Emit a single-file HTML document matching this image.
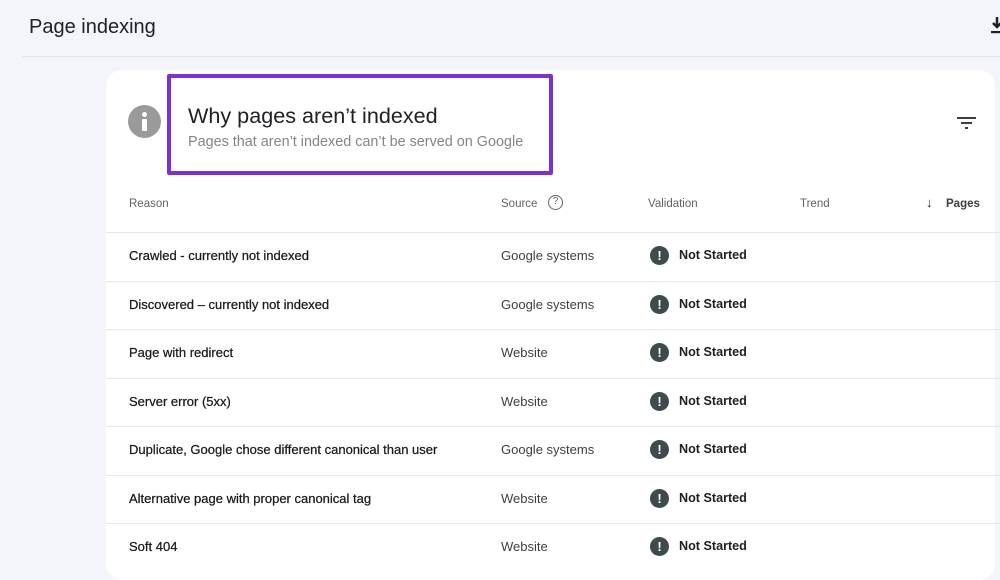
<!DOCTYPE html>
<html><head><meta charset="utf-8"><style>
*{margin:0;padding:0;box-sizing:border-box}
body{width:1000px;height:560px;overflow:hidden;background:#f3f5fa;font-family:"Liberation Sans",sans-serif;position:relative;color:#202124}
.a{position:absolute;white-space:nowrap}
.card{position:absolute;left:106px;top:70px;width:889px;height:510px;background:#fff;border-radius:16px}
.row{position:absolute;left:106px;width:894px;height:1px;background:#e6e7ea}
.r{font-size:13px;color:#1a1a1a;-webkit-text-stroke:0.25px #1a1a1a}
.s{font-size:13px;color:#3c4043}
.ic{position:absolute;left:650px;width:19px;height:19px;border-radius:50%;background:#3d4b4f;color:#fff;font-size:13px;font-weight:bold;text-align:center;line-height:19px}
.ns{font-size:12.6px;font-weight:bold;color:#202124}
.h{font-size:11.5px;color:#5f6368}
</style></head><body>
<div class="a" style="left:29px;top:16px;font-size:20px;color:#202124">Page indexing</div>
<div class="a" style="left:22px;top:56px;width:978px;height:1px;background:#e4e6ec"></div>
<svg class="a" style="left:991px;top:17px" width="12" height="18" viewBox="0 0 12 18"><path d="M6 0v10M2 6l4 4 4-4" stroke="#202124" stroke-width="2.5" fill="none"/><rect x="0" y="14" width="12" height="2.2" fill="#202124"/></svg>
<div class="card"></div>
<div class="a" style="left:128px;top:105px;width:33px;height:33px;border-radius:50%;background:#9a9a9a"></div>
<div class="a" style="left:142px;top:112px;width:5px;height:5px;border-radius:50%;background:#fff"></div>
<div class="a" style="left:142px;top:119px;width:5px;height:12px;background:#fff;border-radius:1px"></div>
<div class="a" style="left:167px;top:74px;width:386px;height:101px;border:4px solid #7e2fd1;border-radius:2px"></div>
<div class="a" style="left:188px;top:103px;font-size:21.6px;color:#202124">Why pages aren’t indexed</div>
<div class="a" style="left:188px;top:134px;font-size:14.4px;color:#80868b">Pages that aren’t indexed can’t be served on Google</div>
<svg class="a" style="left:957px;top:116px" width="19" height="14" viewBox="0 0 19 14"><rect x="0" y="1" width="19" height="2" fill="#3c4043"/><rect x="4" y="6" width="11" height="2" fill="#3c4043"/><rect x="8" y="11" width="3" height="2" fill="#3c4043"/></svg>
<div class="a h" style="left:129px;top:198px">Reason</div>
<div class="a h" style="left:501px;top:198px">Source</div>
<div class="a" style="left:548px;top:195px;width:15px;height:15px;border:1.5px solid #5f6368;border-radius:50%;font-size:10px;text-align:center;line-height:12px;color:#5f6368">?</div>
<div class="a h" style="left:648px;top:198px">Validation</div>
<div class="a h" style="left:800px;top:198px">Trend</div>
<div class="a" style="left:926px;top:195px;font-size:13px;color:#202124">↓</div>
<div class="a" style="left:946px;top:198px;font-size:11.5px;font-weight:bold;color:#3c4043">Pages</div>
<div class="row" style="top:232px"></div>
<div class="row" style="top:281px"></div>
<div class="row" style="top:329px"></div>
<div class="row" style="top:378px"></div>
<div class="row" style="top:426px"></div>
<div class="row" style="top:475px"></div>
<div class="row" style="top:523px"></div>

<div class="a r" style="left:129px;top:248px">Crawled - currently not indexed</div>
<div class="a s" style="left:501px;top:248px">Google systems</div>
<div class="ic" style="top:246px">!</div><div class="a ns" style="left:679px;top:248px">Not Started</div>

<div class="a r" style="left:129px;top:297px">Discovered – currently not indexed</div>
<div class="a s" style="left:501px;top:297px">Google systems</div>
<div class="ic" style="top:295px">!</div><div class="a ns" style="left:679px;top:297px">Not Started</div>

<div class="a r" style="left:129px;top:345px">Page with redirect</div>
<div class="a s" style="left:501px;top:345px">Website</div>
<div class="ic" style="top:343px">!</div><div class="a ns" style="left:679px;top:345px">Not Started</div>

<div class="a r" style="left:129px;top:394px">Server error (5xx)</div>
<div class="a s" style="left:501px;top:394px">Website</div>
<div class="ic" style="top:392px">!</div><div class="a ns" style="left:679px;top:394px">Not Started</div>

<div class="a r" style="left:129px;top:442px">Duplicate, Google chose different canonical than user</div>
<div class="a s" style="left:501px;top:442px">Google systems</div>
<div class="ic" style="top:440px">!</div><div class="a ns" style="left:679px;top:442px">Not Started</div>

<div class="a r" style="left:129px;top:491px">Alternative page with proper canonical tag</div>
<div class="a s" style="left:501px;top:491px">Website</div>
<div class="ic" style="top:489px">!</div><div class="a ns" style="left:679px;top:491px">Not Started</div>

<div class="a r" style="left:129px;top:539px">Soft 404</div>
<div class="a s" style="left:501px;top:539px">Website</div>
<div class="ic" style="top:537px">!</div><div class="a ns" style="left:679px;top:539px">Not Started</div>
</body></html>
